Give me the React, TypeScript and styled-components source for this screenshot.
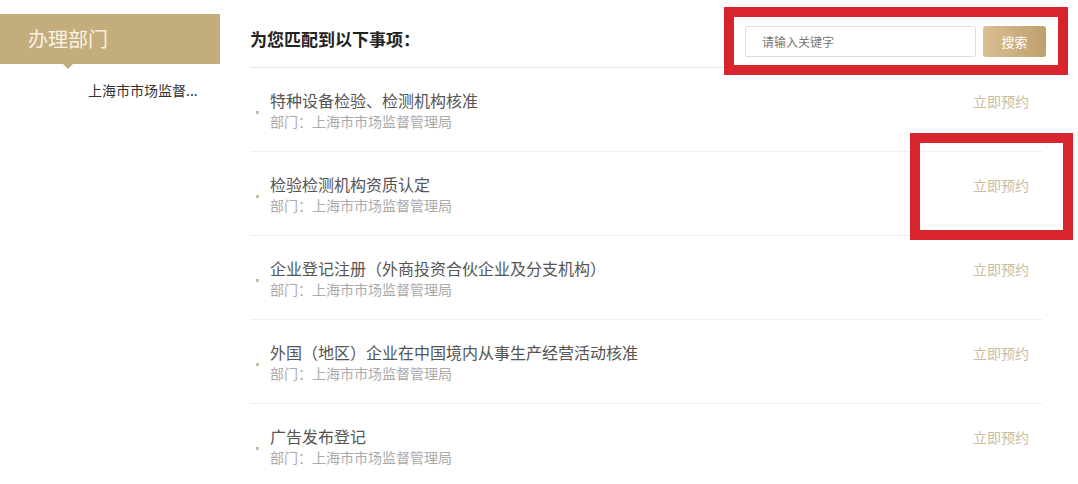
import styled, { createGlobalStyle } from "styled-components";

const items = [
  "特种设备检验、检测机构核准",
  "检验检测机构资质认定",
  "企业登记注册（外商投资合伙企业及分支机构）",
  "外国（地区）企业在中国境内从事生产经营活动核准",
  "广告发布登记",
];

function App() {
  return (
    <>
      <GlobalStyle />
      <Page>
        <Sidebar>
          <SideHead>办理部门</SideHead>
          <SideItem>上海市市场监督...</SideItem>
        </Sidebar>
        <Main>
          <Header>
            <Title>为您匹配到以下事项：</Title>
            <Search>
              <Input placeholder="请输入关键字" />
              <SearchBtn>搜索</SearchBtn>
            </Search>
          </Header>
          <List>
            {items.map((name) => (
              <Row key={name}>
                <Bullet />
                <Info>
                  <ItemName>{name}</ItemName>
                  <Dept>部门：上海市市场监督管理局</Dept>
                </Info>
                <Book>立即预约</Book>
              </Row>
            ))}
          </List>
        </Main>
        {/* red annotation boxes drawn over the screenshot */}
        <Mark $top={7} $left={724} $width={344} $height={68} />
        <Mark $top={133} $left={910} $width={163} $height={107} />
      </Page>
    </>
  );
}

const GlobalStyle = createGlobalStyle`
  body {
    margin: 0;
    background: #fff;
    font-family: "Noto Sans CJK SC", "Noto Sans", sans-serif;
  }
  * { box-sizing: border-box; }
`;

const Page = styled.div`
  position: relative;
  display: flex;
  gap: 30px;
  width: 1078px;
  height: 484px;
  overflow: hidden;
`;

const Sidebar = styled.aside`
  width: 220px;
  padding-top: 14px;
  flex-shrink: 0;
`;

const SideHead = styled.div`
  position: relative;
  height: 50px;
  background: #c4ad7d;
  color: #f8f1e2;
  font-size: 20px;
  line-height: 50px;
  padding-left: 28px;

  &::after {
    content: "";
    position: absolute;
    left: 63px;
    bottom: -5px;
    border-left: 5px solid transparent;
    border-right: 5px solid transparent;
    border-top: 5px solid #c4ad7d;
  }
`;

const SideItem = styled.div`
  margin-top: 16px;
  padding-left: 88px;
  font-size: 14px;
  line-height: 20px;
  color: #333;
  white-space: nowrap;
`;

const Main = styled.main`
  width: 792px;
`;

const Header = styled.header`
  display: flex;
  align-items: center;
  justify-content: space-between;
  height: 68px;
  padding-top: 10px;
  border-bottom: 1px solid #e6e6e6;
  margin-right: -4px;
`;

const Title = styled.h1`
  margin: 0;
  font-size: 17px;
  font-weight: 700;
  color: #222;
`;

const Search = styled.div`
  display: flex;
  align-items: center;
  gap: 7px;
  margin-top: 5px;
`;

const Input = styled.input`
  width: 231px;
  height: 31px;
  border: 1px solid #ddd;
  border-radius: 2px;
  padding: 0 16px;
  font-family: inherit;
  font-size: 12px;
  outline: none;

  &::placeholder {
    color: #777;
  }
`;

const SearchBtn = styled.button`
  width: 63px;
  height: 31px;
  border: none;
  border-radius: 3px;
  background: linear-gradient(90deg, #d9bf93, #bf9f6c);
  color: #fff;
  font-family: inherit;
  font-size: 13px;
`;

const List = styled.ul`
  margin: 0;
  padding: 0;
  list-style: none;
`;

const Row = styled.li`
  display: flex;
  align-items: center;
  height: 84px;
  padding: 0 13px 0 6px;
  border-bottom: 1px solid #eeeeee;
`;

const Bullet = styled.span`
  width: 3px;
  height: 3px;
  margin-top: 5px;
  margin-right: 11px;
  background: #c9bfa5;
`;

const Info = styled.div`
  flex: 1;
  padding-top: 2px;
`;

const ItemName = styled.div`
  font-size: 16px;
  line-height: 21px;
  color: #555;
`;

const Dept = styled.div`
  font-size: 14px;
  line-height: 20px;
  color: #aaa;
`;

const Book = styled.span`
  align-self: flex-start;
  margin-top: 23px;
  font-size: 14px;
  color: #cbbd9c;
`;

const Mark = styled.div<{ $top: number; $left: number; $width: number; $height: number }>`
  position: absolute;
  top: ${(p) => p.$top}px;
  left: ${(p) => p.$left}px;
  width: ${(p) => p.$width}px;
  height: ${(p) => p.$height}px;
  border: 10px solid #d8252d;
`;

export default App;
